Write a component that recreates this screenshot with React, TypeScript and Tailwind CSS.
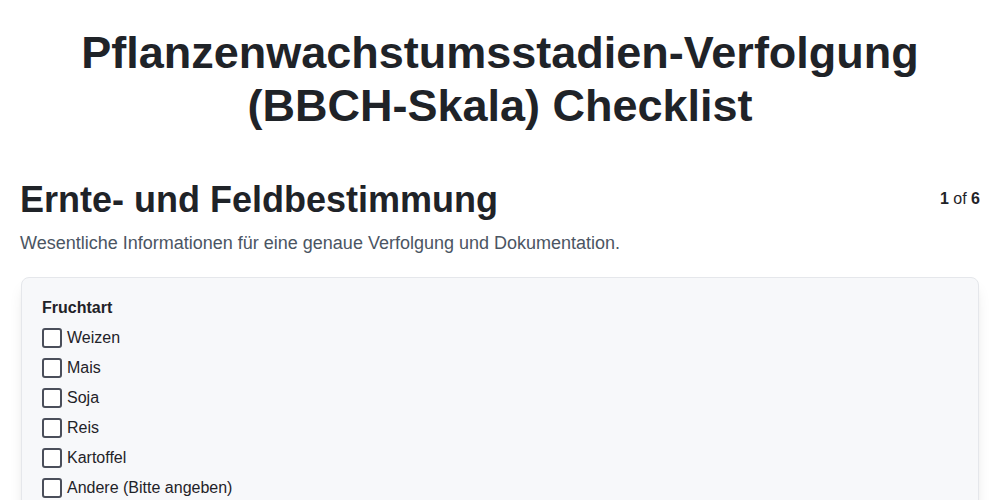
import { useState } from "react";

const crops = ["Weizen", "Mais", "Soja", "Reis", "Kartoffel", "Andere (Bitte angeben)"];

export default function App() {
  const [checked, setChecked] = useState<Record<string, boolean>>({});

  return (
    <div className="min-h-screen bg-white px-5 text-[#1f2328]" style={{ fontFamily: '"Liberation Sans", Arial, sans-serif' }}>
      <h1 className="pt-[26px] text-center text-[45px] font-bold leading-[53px] text-[#1f2328]">
        Pflanzenwachstumsstadien-Verfolgung
        <br />
        (BBCH-Skala) Checklist
      </h1>

      <div className="mt-[46px] flex items-start justify-between">
        <h2 className="text-[36px] font-bold leading-[44px]">Ernte- und Feldbestimmung</h2>
        <div className="pt-[9px] text-base">
          <span className="font-bold">1</span> of <span className="font-bold">6</span>
        </div>
      </div>
      <p className="mt-[9px] text-lg leading-[24px] text-[#4b5563]">
        Wesentliche Informationen für eine genaue Verfolgung und Dokumentation.
      </p>

      <div className="mx-px mt-[22px] rounded-lg border border-[#e5e7eb] bg-[#f7f8fa] p-5 shadow-lg">
        <div className="text-base font-bold leading-[20px]">Fruchtart</div>
        <div className="mt-[10px] flex flex-col gap-[10px]">
          {crops.map((c) => (
            <label key={c} className="flex items-center gap-[5px] leading-[20px]">
              <input
                type="checkbox"
                checked={!!checked[c]}
                onChange={() => setChecked((s) => ({ ...s, [c]: !s[c] }))}
                className="h-5 w-5 appearance-none rounded-[3px] border-2 border-[#4a4e5a] bg-white checked:bg-[#4a4e5a]"
              />
              <span>{c}</span>
            </label>
          ))}
        </div>
      </div>
    </div>
  );
}
